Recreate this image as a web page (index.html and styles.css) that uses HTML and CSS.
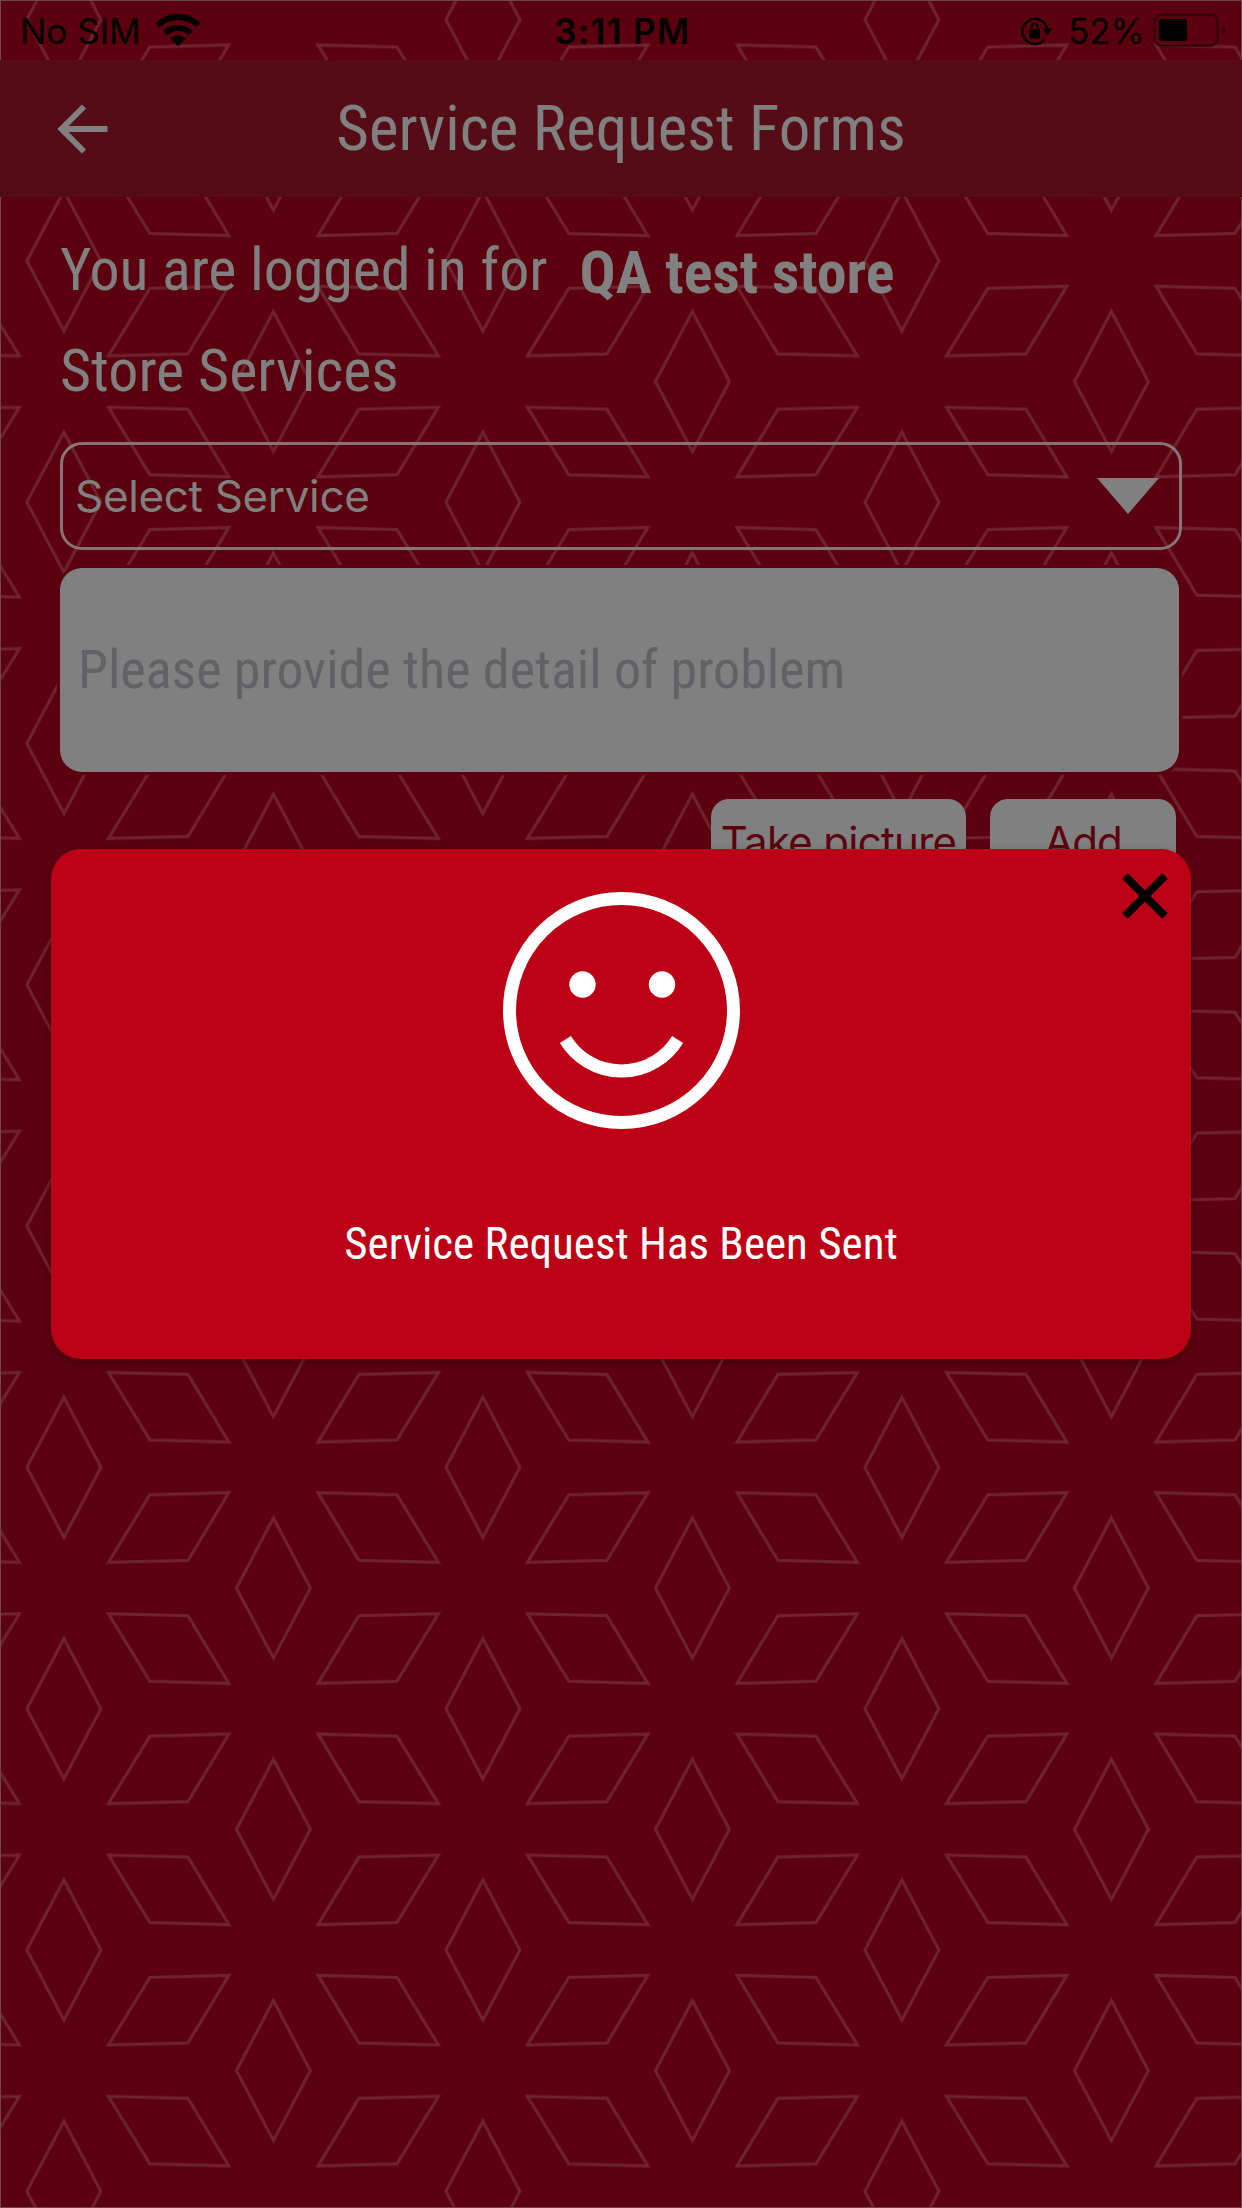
FILE: index.html
```html
<!DOCTYPE html>
<html lang="en">
<head>
    <meta charset="UTF-8">
    <title>Service Request Forms</title>
    <link rel="stylesheet" href="styles.css">
</head>
<body>
    <div class="screen">
        <svg class="pattern" width="1242" height="2208">
            <defs>
                <pattern id="stars" x="63.9" y="19.6" width="419" height="241.3" patternUnits="userSpaceOnUse">
                    <g fill="none" stroke="#6f232f" stroke-width="3">
                        <path d="M0-70L37 0L0 70L-37 0Z"/>
                        <path d="M419-70L456 0L419 70L382 0Z"/>
                        <path d="M0 171.3L37 241.3L0 311.3L-37 241.3Z"/>
                        <path d="M419 171.3L456 241.3L419 311.3L382 241.3Z"/>
                        <path d="M209.5 50.6L246.5 120.6L209.5 190.6L172.5 120.6Z"/>
                        <path d="M86 27.5L165 25.3L124 93L44.5 95Z"/>
                        <path d="M333 27.5L254 25.3L295 93L374.5 95Z"/>
                        <path d="M86 213.8L165 216L124 148.3L44.5 146.3Z"/>
                        <path d="M333 213.8L254 216L295 148.3L374.5 146.3Z"/>
                    </g>
                </pattern>
            </defs>
            <rect width="1242" height="2208" fill="url(#stars)"/>
            <rect class="frame" x="0.5" y="0.5" width="1241" height="2207"/>
        </svg>

        <div class="status-bar">
            <div class="status-left">
                <span class="carrier">No SIM</span>
                <svg class="wifi" width="46" height="34" viewBox="0 0 46 34">
                    <path d="M23 33L15.5 25.5A11 11 0 0 1 30.5 25.5Z"/>
                    <path d="M10.5 20A18 18 0 0 1 35.5 20" fill="none" stroke="#000" stroke-width="6"/>
                    <path d="M2.7 12.2A29 29 0 0 1 43.3 12.2" fill="none" stroke="#000" stroke-width="6"/>
                </svg>
            </div>
            <span class="time">3:11 PM</span>
            <div class="status-right">
                <svg class="lock" width="34" height="32" viewBox="0 0 34 32">
                    <path d="M24.5 23.5A12.5 12.5 0 1 1 27 12" fill="none" stroke="#000" stroke-width="2.5"/>
                    <path d="M22.5 12.5H32L27.5 19.5Z"/>
                    <rect x="9.5" y="13" width="10.5" height="9.5" rx="1"/>
                    <path d="M11.7 14V11A3 3.5 0 0 1 17.7 11V14" fill="none" stroke="#000" stroke-width="1.8"/>
                </svg>
                <span class="percent">52%</span>
                <svg class="battery" width="74" height="34" viewBox="0 0 74 34">
                    <rect x="1.5" y="1.5" width="63" height="31" rx="7" fill="none" stroke="#350008" stroke-width="2.5"/>
                    <rect x="6" y="6" width="28" height="22" rx="3"/>
                    <path d="M69 12Q72.5 13 72.5 17T69 22Z" fill="#350008"/>
                </svg>
            </div>
        </div>

        <div class="header">
            <svg class="back" width="52" height="50" viewBox="0 0 52 50">
                <path d="M50.5 25H5M27 2.5L4.5 25L27 47.5" fill="none" stroke="#808080" stroke-width="6"/>
            </svg>
            <h1 class="title">Service Request Forms</h1>
        </div>

        <div class="content">
            <div class="login-row">
                <span class="login-label">You are logged in for</span>
                <span class="store-name">QA test store</span>
            </div>
            <div class="section-title">Store Services</div>
            <div class="select-box">
                <span class="select-label">Select Service</span>
                <svg width="62" height="36" viewBox="0 0 62 36"><path d="M0 0H62L31 36Z" fill="#808080"/></svg>
            </div>
            <div class="detail-box"><span class="placeholder">Please provide the detail of problem</span></div>
            <div class="button-row">
                <div class="button take">Take picture</div>
                <div class="button add">Add</div>
            </div>
        </div>

        <div class="modal">
            <svg class="close" width="46" height="46" viewBox="0 0 46 46">
                <path d="M3 3L43 43M43 3L3 43" stroke="#000" stroke-width="8"/>
            </svg>
            <svg class="smiley" width="238" height="238" viewBox="0 0 238 238">
                <circle cx="119.5" cy="119.5" r="112" fill="none" stroke="#fff" stroke-width="13"/>
                <circle cx="80.5" cy="93.5" r="13.2" fill="#fff"/>
                <circle cx="160" cy="93.5" r="13.2" fill="#fff"/>
                <path d="M63.4 148.5A65.7 65.7 0 0 0 175.6 148.5" fill="none" stroke="#fff" stroke-width="13"/>
            </svg>
            <div class="message">Service Request Has Been Sent</div>
        </div>
    </div>
</body>
</html>
```

FILE: styles.css
```css
* {
    margin: 0;
    padding: 0;
    box-sizing: border-box;
}
body {
    font-family: "Roboto Condensed", Roboto, sans-serif;
    background: #5c000f;
}
svg {
    display: block;
}
.screen {
    position: relative;
    width: 1242px;
    height: 2208px;
    overflow: hidden;
    background: #5c000f;
}
.pattern {
    position: absolute;
    top: 0;
    left: 0;
}
.frame {
    fill: none;
    stroke: #6c474c;
}
.status-bar, .header, .content {
    position: relative;
}
.status-bar {
    display: flex;
    justify-content: space-between;
    height: 60px;
    padding: 0 15px 0 20px;
    font-family: Inter, sans-serif;
    font-size: 35px;
    line-height: 63px;
    color: #000;
}
.status-left, .status-right {
    display: flex;
    width: 400px;
}
.status-right {
    justify-content: flex-end;
}
.wifi {
    margin: 13px 0 0 14px;
}
.time {
    margin-right: 2px;
    font-weight: 600;
    letter-spacing: 1.4px;
}
.lock {
    margin: 16px 14px 0 0;
}
.battery {
    margin: 13px 0 0 8px;
}
.header {
    display: flex;
    align-items: center;
    justify-content: center;
    height: 137px;
    background: #560c14;
}
.back {
    position: absolute;
    left: 57px;
    top: 44px;
}
.title {
    font-size: 63px;
    font-weight: 400;
    font-stretch: 75%;
    color: #808080;
}
.content {
    padding: 0 60px;
    color: #808080;
}
.login-row {
    display: flex;
    gap: 32px;
    height: 120px;
    padding-top: 37px;
    font-size: 60px;
    font-stretch: 75%;
}
.login-label {
    letter-spacing: -0.1px;
}
.store-name {
    padding-top: 3px;
    font-weight: 700;
}
.section-title {
    height: 125px;
    padding-top: 18px;
    font-size: 60px;
    font-stretch: 75%;
}
.select-box {
    display: flex;
    align-items: center;
    justify-content: space-between;
    height: 108px;
    padding: 0 20px 0 12px;
    border: 3px solid #857478;
    border-radius: 22px;
    font-family: Inter, sans-serif;
    font-size: 44px;
}
.select-label {
    letter-spacing: -0.35px;
}
/* the outer ring keeps the pattern from touching the box */
.detail-box {
    display: flex;
    align-items: center;
    width: 1119px;
    height: 204px;
    margin-top: 18px;
    padding: 0 0 2px 18px;
    border-radius: 22px;
    background: #808080;
    box-shadow: 0 0 0 3px #5c000f;
    font-size: 54px;
    font-stretch: 75%;
    color: #626266;
}
.button-row {
    display: flex;
    justify-content: flex-end;
    gap: 24px;
    margin-top: 27px;
    padding-right: 6px;
}
.button {
    height: 90px;
    border-radius: 18px;
    background: #808080;
    font-family: Inter, sans-serif;
    font-size: 42px;
    letter-spacing: -1.2px;
    line-height: 86px;
    text-align: center;
    white-space: nowrap;
    color: #5c000f;
}
.take {
    width: 255px;
    letter-spacing: -0.7px;
}
.add {
    width: 186px;
}
.modal {
    position: absolute;
    left: 51px;
    top: 849px;
    width: 1140px;
    height: 510px;
    padding-top: 42px;
    border-radius: 30px;
    background: #bc0016;
    box-shadow: 0 3px 8px rgba(0, 0, 0, 0.35);
    text-align: center;
}
.close {
    position: absolute;
    top: 24px;
    right: 23px;
}
.smiley {
    margin: 0 auto;
}
.message {
    margin-top: 88px;
    font-size: 45px;
    font-stretch: 75%;
    color: #fff;
}
```
